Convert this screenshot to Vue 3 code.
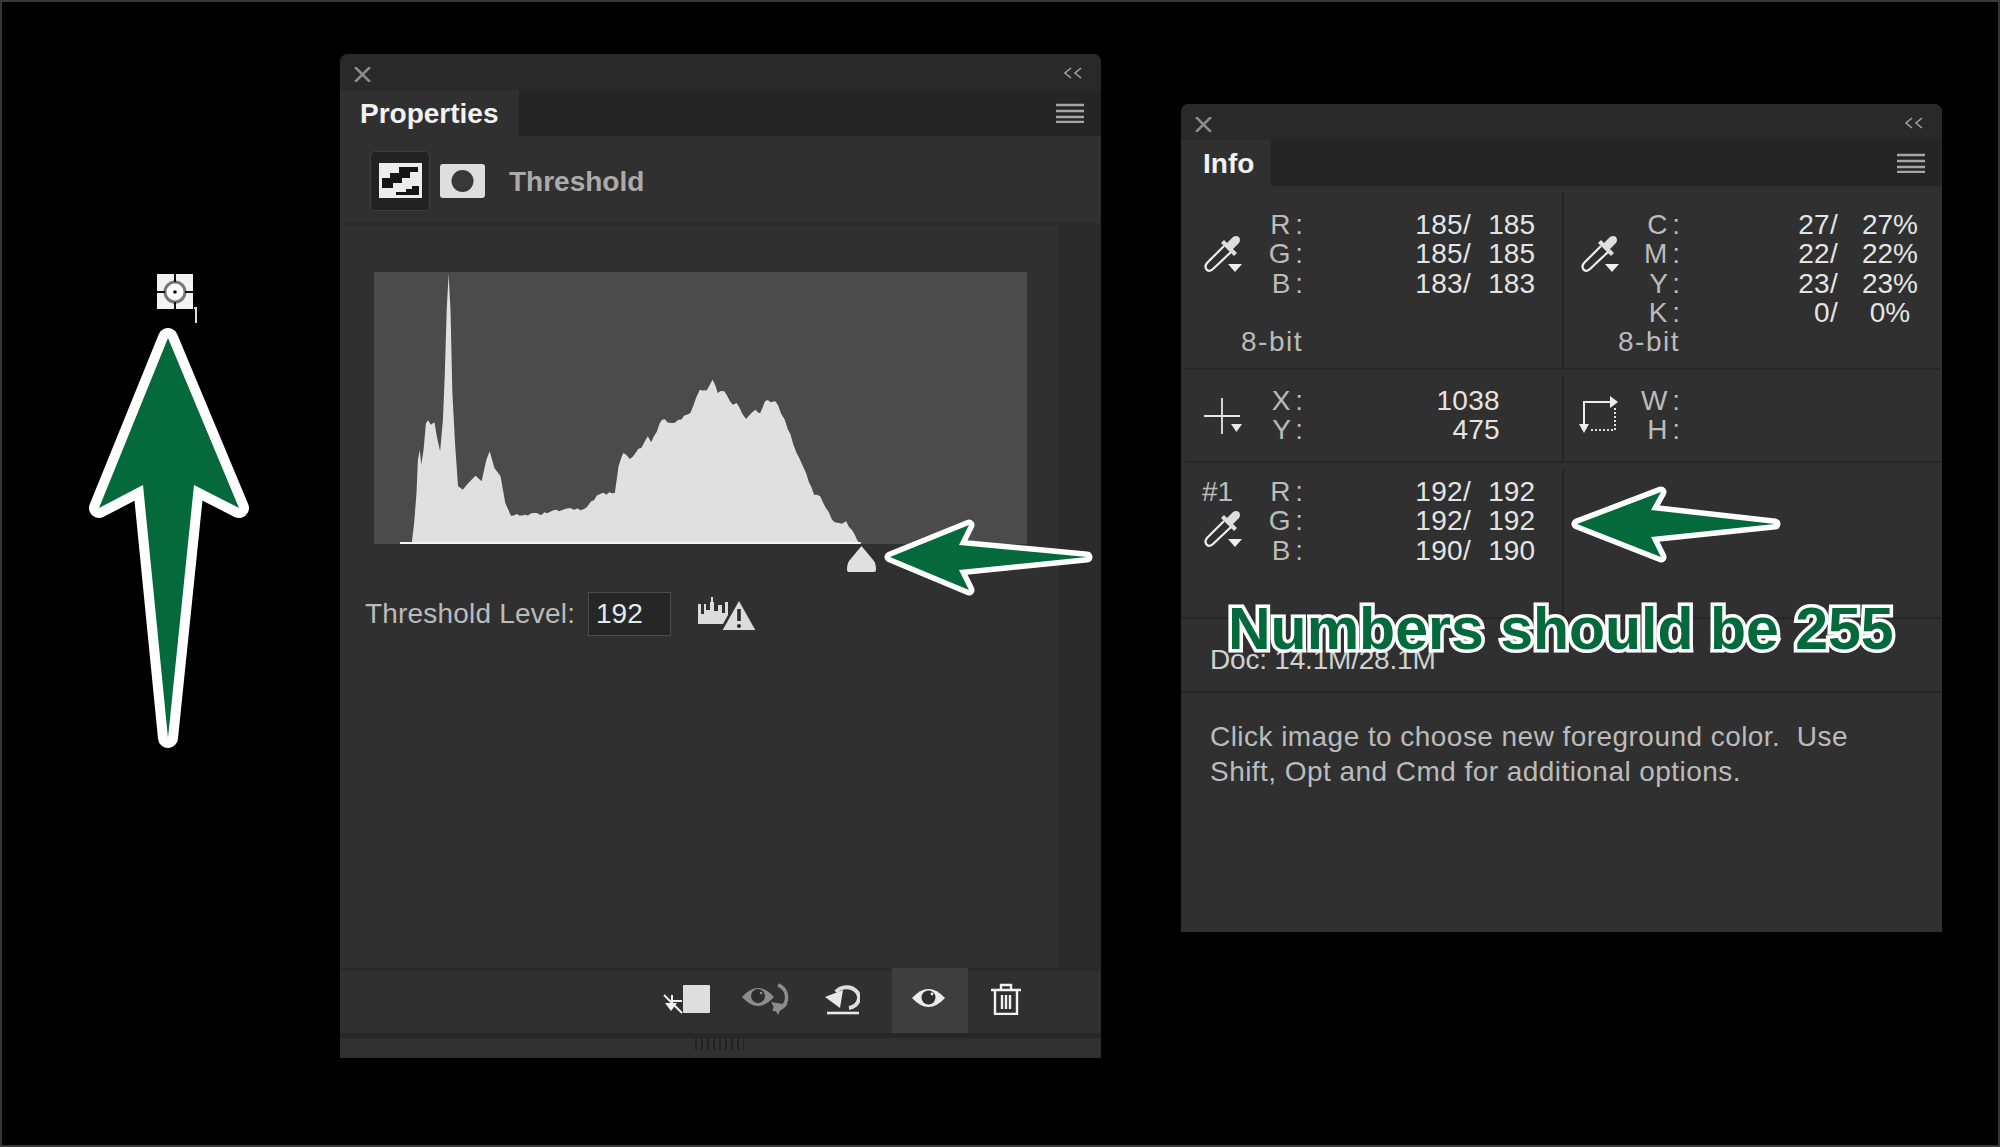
<template>
  <div class="stage">
    <!-- sampler cursor -->
    <svg class="target" width="44" height="52" viewBox="0 0 44 52">
      <rect x="0" y="0" width="36" height="35" fill="#f2f2f2" />
      <circle cx="18" cy="18" r="10" fill="#fff" stroke="#777" stroke-width="3" />
      <path d="M18 0V8M18 28V36M0 18H8M28 18H37" stroke="#111" stroke-width="2" />
      <circle cx="18" cy="18" r="1.8" fill="#111" />
      <path d="M39 33V49M37 34H39" stroke="#ddd" stroke-width="2" fill="none" />
    </svg>

    <section class="panel props">
      <div class="titlebar">
        <svg width="17" height="15" viewBox="0 0 17 15"><path d="M1 0L16 15M16 0L1 15" stroke="#8c8c8c" stroke-width="2.5" /></svg>
        <svg width="19" height="12" viewBox="0 0 19 12"><path d="M7 1L1 6L7 11M17 1L11 6L17 11" stroke="#a0a0a0" stroke-width="1.6" fill="none" /></svg>
      </div>
      <div class="tabs">
        <div class="tab props-tab">Properties</div>
        <svg class="menu" width="28" height="20" viewBox="0 0 28 20"><path d="M0 2H28M0 8H28M0 14H28M0 19H28" stroke="#a6a6a6" stroke-width="2.4" /></svg>
      </div>
      <div class="head">
        <div class="head-btn">
          <svg width="43" height="35" viewBox="0 0 43 35">
            <rect width="43" height="35" fill="#ececec" />
            <path d="M3 15H11V10H20V4H39V9H31V15H23V20H14V25H3Z" fill="#141414" />
            <path d="M17 32V29H27V26H33V23H40V32Z" fill="#141414" />
          </svg>
        </div>
        <svg class="head-mask" width="45" height="34" viewBox="0 0 45 34">
          <rect width="45" height="34" rx="3" fill="#dedede" />
          <circle cx="22.5" cy="17" r="11" fill="#383838" />
        </svg>
        <div class="head-title">Threshold</div>
      </div>
      <div class="body">
        <div class="content">
          <svg class="hist" width="653" height="272" viewBox="30 37 1383 816" preserveAspectRatio="none">
            <rect x="30" y="37" width="1383" height="816" fill="#4b4b4b" />
            <polygon :points="histPoints" fill="#e0e0e0" />
            <rect x="85" y="847" width="976" height="6" fill="#f5f5f5" />
          </svg>
          <svg class="thumb" width="29" height="26" viewBox="0 0 29 26">
            <path d="M14.5 0L27 15Q29 18 29 24Q29 26 27 26H2Q0 26 0 24Q0 18 2 15Z" fill="#e0e0e0" />
          </svg>
          <div class="level">
            <span class="level-label">Threshold Level:</span>
            <div class="level-input">192</div>
            <svg class="warn" width="59" height="34" viewBox="0 0 59 34">
              <path d="M0 7H3V17H6V7H8V13H12V5H13V0H15V5H16V14H20V8H24V16H27V5H30V18L25 27H0Z" fill="#dcdcdc" />
              <path d="M41 2L59 34H23Z" fill="#dcdcdc" stroke="#323232" stroke-width="2" />
              <path d="M41 12V24" stroke="#2a2a2a" stroke-width="3.5" />
              <circle cx="41" cy="29" r="2" fill="#2a2a2a" />
            </svg>
          </div>
        </div>
        <div class="strip"></div>
      </div>
      <div class="foot">
        <svg class="f1" width="50" height="32" viewBox="0 0 50 32">
          <rect x="21" y="2" width="27" height="28" rx="1" fill="#dedede" />
          <path d="M2 12L20 30" stroke="#f0f0f0" stroke-width="2" />
          <path d="M10 12V18H20" stroke="#f0f0f0" stroke-width="2" fill="none" />
          <path d="M3 20H15L9 28Z" fill="#f0f0f0" />
        </svg>
        <svg class="f2" width="48" height="32" viewBox="0 0 48 32">
          <path d="M0 14Q16 -4 32 14Q16 32 0 14Z" fill="#8c8c8c" />
          <circle cx="16" cy="13" r="7" fill="#2e2e2e" />
          <circle cx="19" cy="10" r="1.3" fill="#8c8c8c" />
          <path d="M36 2A13 13 0 0 1 42 22" stroke="#8c8c8c" stroke-width="3.5" fill="none" />
          <path d="M31 26A11 11 0 0 0 44 20" stroke="#8c8c8c" stroke-width="3.5" fill="none" />
          <path d="M29 19L41 21L36 32Z" fill="#8c8c8c" />
        </svg>
        <svg class="f3" width="35" height="32" viewBox="0 0 35 32">
          <path d="M2 30H34" stroke="#eaeaea" stroke-width="2.6" />
          <path d="M11 9A12.5 10.5 0 1 1 24 25" stroke="#dedede" stroke-width="4" fill="none" />
          <path d="M0 14L18 7L15 25Z" fill="#e8e8e8" />
        </svg>
        <div class="eye-btn">
          <svg width="33" height="22" viewBox="0 0 33 22">
            <path d="M0 11Q16.5 -7 33 11Q16.5 29 0 11Z" fill="#ececec" />
            <circle cx="16.5" cy="10.5" r="7" fill="#2e2e2e" />
            <circle cx="20" cy="7" r="1.4" fill="#ececec" />
          </svg>
        </div>
        <svg class="f5" width="30" height="32" viewBox="0 0 30 32">
          <path d="M0 7H30M10 7V2H20V7M4 7V31H26V7M11 12V26M15 12V26M19 12V26" stroke="#f2f2f2" stroke-width="2.4" fill="none" />
        </svg>
      </div>
      <div class="grip-row"><div class="grip"></div></div>
    </section>

    <section class="panel info">
      <div class="titlebar">
        <svg width="17" height="15" viewBox="0 0 17 15"><path d="M1 0L16 15M16 0L1 15" stroke="#8c8c8c" stroke-width="2.5" /></svg>
        <svg width="19" height="12" viewBox="0 0 19 12"><path d="M7 1L1 6L7 11M17 1L11 6L17 11" stroke="#a0a0a0" stroke-width="1.6" fill="none" /></svg>
      </div>
      <div class="tabs">
        <div class="tab info-tab">Info</div>
        <svg class="menu" width="28" height="20" viewBox="0 0 28 20"><path d="M0 2H28M0 8H28M0 14H28M0 19H28" stroke="#a6a6a6" stroke-width="2.4" /></svg>
      </div>

      <div class="row row-color">
        <div class="cell cell-l">
          <div class="ico">
            <svg class="dropper" width="38" height="38" viewBox="0 0 38 38">
              <use href="#dropper-shape" />
            </svg>
          </div>
          <div class="lines">
            <div v-for="l in rgbTop" :key="l[0]" class="line">
              <span class="lab">{{ l[0] }} :</span><span class="v1">{{ l[1] }}/</span><span class="v2">{{ l[2] }}</span>
            </div>
          </div>
          <div class="bit">8-bit</div>
        </div>
        <div class="cell cell-r">
          <div class="ico">
            <svg class="dropper" width="38" height="38" viewBox="0 0 38 38">
              <use href="#dropper-shape" />
            </svg>
          </div>
          <div class="lines">
            <div v-for="l in cmyk" :key="l[0]" class="line">
              <span class="lab">{{ l[0] }} :</span><span class="v1">{{ l[1] }}/</span><span class="v2">{{ l[2] }}</span>
            </div>
          </div>
          <div class="bit">8-bit</div>
        </div>
      </div>

      <div class="row row-pos">
        <div class="cell cell-l">
          <div class="ico">
            <svg class="cross" width="38" height="36" viewBox="0 0 38 36">
              <path d="M18 0V36M0 18H36" stroke="#e8e8e8" stroke-width="1.8" />
              <path d="M27 26H38L32.5 34Z" fill="#e8e8e8" />
            </svg>
          </div>
          <div class="lines">
            <div class="line"><span class="lab">X :</span><span class="v1">1038</span></div>
            <div class="line"><span class="lab">Y :</span><span class="v1">475</span></div>
          </div>
        </div>
        <div class="cell cell-r">
          <div class="ico">
            <svg class="size" width="40" height="38" viewBox="0 0 40 38">
              <path d="M5 30V6H32" stroke="#eee" stroke-width="2" fill="none" />
              <path d="M31 0L39 6L31 12Z" fill="#eee" />
              <path d="M0 28H10L5 37Z" fill="#eee" />
              <path d="M36 12V34H11" stroke="#ddd" stroke-width="2" stroke-dasharray="2 2" fill="none" />
            </svg>
          </div>
          <div class="lines">
            <div class="line"><span class="lab">W :</span></div>
            <div class="line"><span class="lab">H :</span></div>
          </div>
        </div>
      </div>

      <div class="row row-sample">
        <div class="cell cell-l">
          <div class="ico">
            <div class="sample-no">#1</div>
            <svg class="dropper-s" width="38" height="38" viewBox="0 0 38 38">
              <use href="#dropper-shape" />
            </svg>
          </div>
          <div class="lines">
            <div v-for="l in rgbSample" :key="l[0]" class="line">
              <span class="lab">{{ l[0] }} :</span><span class="v1">{{ l[1] }}/</span><span class="v2">{{ l[2] }}</span>
            </div>
          </div>
        </div>
        <div class="cell cell-r"></div>
      </div>

      <div class="row-doc">Doc: 14.1M/28.1M</div>
      <div class="row-help">Click image to choose new foreground color.&nbsp; Use<br />Shift, Opt and Cmd for additional options.</div>
    </section>

    <!-- shared dropper drawing -->
    <svg class="defs" width="0" height="0">
      <defs>
        <g id="dropper-shape">
          <path d="M20 11L3 28Q0 32 3 35Q6 37 9 34L27 17" stroke="#eee" stroke-width="2.2" fill="none" />
          <path d="M17 8L20 5L33 18L30 21Z" fill="#dedede" />
          <path d="M22 9L29 2Q32 0 35 2Q37 5 35 8L28 15Z" fill="#dedede" />
          <path d="M24 29H38L31 37Z" fill="#f0f0f0" />
        </g>
      </defs>
    </svg>

    <!-- annotations drawn over the screenshot -->
    <svg class="overlay" width="2000" height="1147" viewBox="0 0 2000 1147">
      <polygon v-for="a in arrows" :key="a.id" :points="a.points" class="arrow" :stroke-width="a.stroke" />
    </svg>
    <div class="note">Numbers should be 255</div>
  </div>
</template>

<script setup>
// histogram outline, traced from the reference
const hist = [
  [85, 853], [110, 850], [115, 790], [120, 700], [123, 600], [127, 570], [130, 615], [135, 570],
  [140, 490], [145, 482], [150, 495], [158, 488], [163, 530], [170, 575], [176, 480], [180, 340],
  [184, 150], [188, 42], [192, 150], [196, 400], [202, 560], [208, 680], [218, 690], [230, 670],
  [245, 648], [258, 665], [268, 600], [275, 575], [285, 625], [298, 650], [308, 730], [320, 768],
  [350, 765], [375, 760], [385, 765], [410, 752], [430, 750], [445, 745], [455, 750], [475, 748],
  [490, 725], [510, 702], [540, 700], [548, 620], [558, 580], [572, 598], [600, 555], [610, 530],
  [617, 548], [640, 480], [660, 490], [675, 480], [700, 460], [720, 390], [735, 392], [747, 360],
  [758, 400], [772, 395], [790, 435], [798, 430], [818, 478], [838, 450], [848, 460], [858, 425],
  [880, 425], [900, 480], [925, 580], [945, 640], [962, 705], [975, 710], [1000, 780], [1015, 790],
  [1030, 785], [1060, 853],
];

// break long segments up a little, the real curve is jagged
const jagged = [];
hist.forEach((p, i) => {
  const next = hist[i + 1];
  jagged.push(p);
  if (!next || i === 0) return;
  for (let x = p[0] + 6; x < next[0] - 3; x += 6) {
    const t = (x - p[0]) / (next[0] - p[0]);
    const wobble = x > 330 ? Math.sin(x * 1.7) * 4 : 0;
    jagged.push([x, p[1] + (next[1] - p[1]) * t + wobble]);
  }
});
const histPoints = jagged.map((p) => p.join(',')).join(' ');

const rgbTop = [
  ['R', 185, 185],
  ['G', 185, 185],
  ['B', 183, 183],
];
const cmyk = [
  ['C', 27, '27%'],
  ['M', 22, '22%'],
  ['Y', 23, '23%'],
  ['K', 0, '0%'],
];
const rgbSample = [
  ['R', 192, 192],
  ['G', 192, 192],
  ['B', 190, 190],
];

const arrows = [
  { id: 'up', stroke: 20, points: '168,338 99,508 143,485 168,738 194,485 239,508' },
  { id: 'hist', stroke: 11, points: '890,557 969,525 959,545 1087,557 959,570 969,590' },
  { id: 'info', stroke: 11, points: '1577,524 1661,492 1651,510 1775,524 1651,537 1661,557' },
];
</script>

<style>
html,
body {
  margin: 0;
  background: #000;
}
</style>

<style scoped>
.stage {
  position: relative;
  box-sizing: border-box;
  width: 2000px;
  height: 1147px;
  padding: 54px 0 0 340px;
  display: flex;
  align-items: flex-start;
  gap: 80px;
  background: #000;
  font-family: "Liberation Sans", Arial, sans-serif;
  font-size: 28px;
  color: #bbb;
  overflow: hidden;
}

.stage::after {
  content: '';
  position: absolute;
  inset: 0;
  border: 2px solid #383838;
  pointer-events: none;
}

.target {
  position: absolute;
  left: 157px;
  top: 274px;
}

.panel {
  width: 761px;
  background: #303030;
  border-radius: 8px 8px 0 0;
  overflow: hidden;
  flex-shrink: 0;
}

.props {
  height: 1004px;
}

.info {
  height: 828px;
  margin-top: 50px;
}

.titlebar {
  height: 36px;
  padding: 13px 18px 0 14px;
  box-sizing: border-box;
  display: flex;
  justify-content: space-between;
  align-items: flex-start;
  background: #292929;
}

.tabs {
  height: 46px;
  display: flex;
  justify-content: space-between;
  align-items: center;
  padding-right: 17px;
  background: #252525;
}

.tab {
  height: 46px;
  box-sizing: border-box;
  padding: 2px 0 0 20px;
  line-height: 44px;
  font-weight: 700;
  color: #f2f2f2;
  background: #303030;
}

.props-tab {
  width: 179px;
}

.info-tab {
  width: 90px;
  padding-left: 22px;
}

/* properties */
.head {
  height: 89px;
  box-sizing: border-box;
  padding: 2px 0 0 30px;
  display: flex;
  align-items: center;
  border-bottom: 2px solid #2a2a2a;
}

.head-btn {
  width: 60px;
  height: 60px;
  box-sizing: border-box;
  display: flex;
  align-items: center;
  justify-content: center;
  background: #222;
  border: 1px solid #3e3e3e;
  border-radius: 5px;
}

.head-mask {
  margin-left: 10px;
}

.head-title {
  margin: 3px 0 0 24px;
  font-weight: 700;
  color: #ababab;
}

.body {
  height: 743px;
  display: flex;
}

.content {
  flex: 1;
}

.strip {
  width: 42px;
  background: #2a2a2a;
}

.hist {
  display: block;
  margin: 47px 0 0 34px;
}

.thumb {
  display: block;
  margin: 2px 0 0 507px;
}

.level {
  margin: 20px 0 0 25px;
  display: flex;
  align-items: flex-start;
}

.level-label {
  width: 223px;
  line-height: 44px;
  letter-spacing: 0.2px;
}

.level-input {
  width: 83px;
  height: 44px;
  box-sizing: border-box;
  padding-left: 7px;
  line-height: 42px;
  color: #e8e8e8;
  background: #262626;
  border: 1px solid #4c4c4c;
}

.warn {
  margin: 5px 0 0 27px;
}

.foot {
  height: 65px;
  display: flex;
  align-items: center;
  padding: 0 0 5px 322px;
  border-top: 2px solid #2a2a2a;
  box-sizing: border-box;
}

.f2 {
  margin-left: 30px;
}

.f3 {
  margin-left: 35px;
}

.f5 {
  margin-left: 23px;
}

.eye-btn {
  width: 76px;
  height: 65px;
  box-sizing: border-box;
  margin: -2px 0 -5px 32px;
  padding: 0 4px 6px 0;
  display: flex;
  align-items: center;
  justify-content: center;
  background: #3e3e3e;
}

.grip-row {
  height: 23px;
  box-sizing: border-box;
  padding-left: 355px;
  border-top: 5px solid #272727;
  background: #313131;
}

.grip {
  width: 49px;
  height: 12px;
  background: repeating-linear-gradient(90deg, #222 0 2px, transparent 2px 6px);
}

/* info */
.row {
  display: flex;
  margin-left: 4px;
  margin-right: 2px;
  border-bottom: 2px solid #262626;
}

.row-color {
  height: 182px;
}

.row-pos {
  height: 91px;
}

.row-sample {
  height: 154px;
  border-bottom: none;
}

.cell {
  position: relative;
  display: flex;
  flex-wrap: wrap;
  align-content: flex-start;
  box-sizing: border-box;
}

.cell-l {
  width: 377px;
  padding-left: 19px;
}

.cell-r {
  flex: 1;
  padding-left: 17px;
  border-left: 2px solid #262626;
  margin-top: 6px;
}

.row-color .cell-l {
  padding-top: 24px;
}

.row-color .cell-r {
  padding-top: 18px;
}

.row-pos .cell-l {
  padding-top: 16px;
}

.row-pos .cell-r {
  padding-top: 10px;
}

.row-sample .cell-l {
  padding-top: 14px;
}

.ico {
  width: 60px;
}

.dropper {
  display: block;
  margin-top: 25px;
}

.cross {
  display: block;
  margin-top: 12px;
}

.size {
  display: block;
  margin: 10px 0 0 -2px;
}

.sample-no {
  line-height: 29.3px;
  margin-left: -2px;
}

.dropper-s {
  display: block;
  margin-top: 4px;
}

.lines {
  flex: 1;
}

.line {
  display: flex;
  height: 29.3px;
  line-height: 29.3px;
}

.lab {
  width: 39px;
  text-align: right;
  white-space: nowrap;
  word-spacing: -3px;
}

.v1 {
  width: 168px;
  text-align: right;
  color: #e4e4e4;
  letter-spacing: 0.3px;
}

.v2 {
  width: 64px;
  text-align: right;
  color: #e4e4e4;
}

.row-pos .v1 {
  width: 197px;
}

.cell-r .v1 {
  width: 158px;
}

.cell-r .v2 {
  width: 80px;
  margin-left: 12px;
  text-align: center;
}

.bit {
  width: 99px;
  text-align: right;
  line-height: 29.3px;
  white-space: nowrap;
  letter-spacing: 1.5px;
}

.cell-l .bit {
  margin-top: 29.3px;
}

.row-doc {
  height: 76px;
  box-sizing: border-box;
  padding: 26px 0 0 29px;
  line-height: 29.3px;
  letter-spacing: -0.2px;
  color: #d0d0d0;
  border-top: 2px solid #262626;
  border-bottom: 2px solid #262626;
}

.row-help {
  padding: 27px 0 0 29px;
  line-height: 34.5px;
  letter-spacing: 0.45px;
  white-space: nowrap;
}

.defs {
  position: absolute;
}

.overlay {
  position: absolute;
  left: 0;
  top: 0;
}

.arrow {
  fill: #056a3b;
  stroke: #fff;
  stroke-linejoin: round;
  paint-order: stroke;
}

.note {
  position: absolute;
  left: 1228px;
  top: 596px;
  font-size: 59px;
  line-height: 66px;
  font-weight: 700;
  color: #056a3b;
  white-space: nowrap;
  -webkit-text-stroke: 7px #fff;
  paint-order: stroke fill;
}
</style>
